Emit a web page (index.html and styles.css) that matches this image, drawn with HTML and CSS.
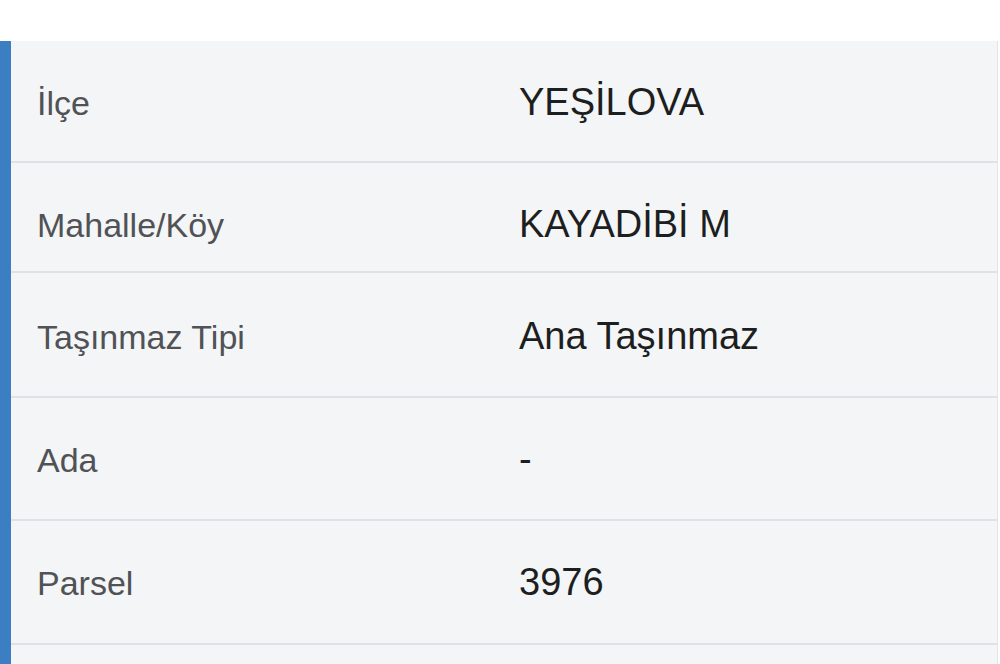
FILE: index.html
```html
<!DOCTYPE html>
<html lang="tr">
<head>
<meta charset="utf-8">
<title>Taşınmaz Bilgileri</title>
<link rel="stylesheet" href="styles.css">
</head>
<body>
<div class="panel">
  <div class="row"><span class="label">İlçe</span><span class="value">YEŞİLOVA</span></div>
  <div class="row"><span class="label">Mahalle/Köy</span><span class="value">KAYADİBİ M</span></div>
  <div class="row row-tall"><span class="label">Taşınmaz Tipi</span><span class="value">Ana Taşınmaz</span></div>
  <div class="row"><span class="label">Ada</span><span class="value">-</span></div>
  <div class="row"><span class="label">Parsel</span><span class="value">3976</span></div>
  <div class="row row-empty"></div>
</div>
</body>
</html>
```
FILE: styles.css
```css
html, body {
  margin: 0;
  padding: 0;
  background: #ffffff;
}
body {
  font-family: "Liberation Sans", Arial, Helvetica, sans-serif;
  padding-top: 41px;
  height: 664px;
  box-sizing: border-box;
  overflow: hidden;
}
.panel {
  height: 623px;
  background: #f4f5f7;
  border-left: 11px solid #3b7fc2;
  border-right: 1px solid #e4e5e8;
  margin-right: 2px;
  display: grid;
  grid-template-rows: 122px 110px 125px 123px 124px 1fr;
}
.row {
  display: flex;
  align-items: baseline;
  box-sizing: border-box;
  padding-top: 42px;
  padding-left: 26px;
  border-bottom: 2px solid #dfe1e5;
  line-height: 38px;
}
.row-tall {
  padding-top: 44px;
}
.row-empty {
  border-bottom: none;
}
.label {
  width: 482px;
  flex: none;
  font-size: 34px;
  color: #505256;
}
.value {
  font-size: 38px;
  color: #1d1e20;
}
```
